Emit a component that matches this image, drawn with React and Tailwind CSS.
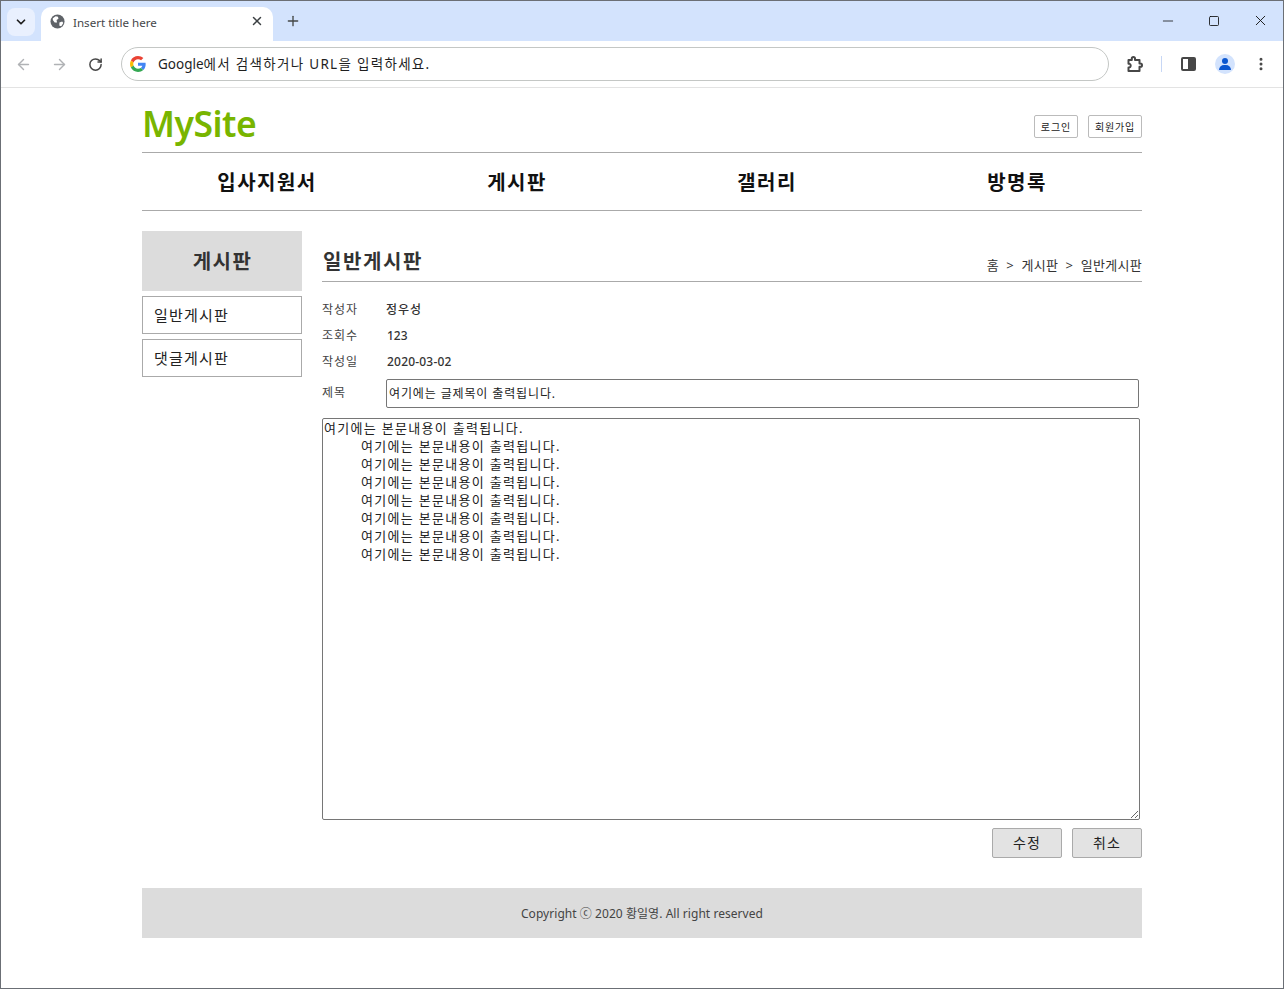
import React from 'react';
import { ArrowLeft, ArrowRight, RotateCw, X, Plus, ChevronDown, Minus, Square, EllipsisVertical } from 'lucide-react';

const FONT = '"Noto Sans", "Noto Sans CJK KR", sans-serif';
const BODY_LINE = '여기에는 본문내용이 출력됩니다.';
const BODY_TEXT = [BODY_LINE, ...Array(7).fill('\t' + BODY_LINE)].join('\n');

const GoogleLogo = () => (
  <svg width="16" height="16" viewBox="0 0 48 48">
    <path fill="#EA4335" d="M24 9.500c3.500 0 6.700 1.200 9.200 3.600l6.900-6.900C35.900 2.400 30.500 0 24 0 14.600 0 6.500 5.400 2.600 13.200l8 6.200C12.500 13.700 17.800 9.500 24 9.500z" />
    <path fill="#4285F4" d="M47 24.500c0-1.600-.1-3.100-.4-4.500H24v9h12.900c-.6 3-2.200 5.500-4.700 7.200l7.700 6C44.400 38 47 31.800 47 24.500z" />
    <path fill="#FBBC05" d="M10.600 28.600c-.5-1.400-.8-3-.8-4.600s.3-3.200.8-4.600l-8-6.200C1 16.400 0 20.100 0 24s1 7.600 2.600 10.800l8-6.200z" />
    <path fill="#34A853" d="M24 48c6.500 0 11.900-2.100 15.900-5.800l-7.700-6c-2.100 1.400-4.900 2.300-8.200 2.300-6.200 0-11.500-4.200-13.400-9.900l-8 6.200C6.500 42.600 14.600 48 24 48z" />
  </svg>
);

// chrome's extensions button, lucide's puzzle is a different shape
const ExtensionIcon = () => (
  <svg width="18" height="18" viewBox="0 0 18 18" fill="none" stroke="#474747" strokeWidth="2" strokeLinejoin="round" className="ml-[17px]">
    <path d="M2.500 5h3.300V3.600a1.600 1.600 0 0 1 3.200 0V5h4.500v3.600h.9a1.600 1.600 0 0 1 0 3.200h-.9V16H2.500v-3.500c1.500.2 2.200-.7 2.200-1.900S3.900 8.500 2.500 8.700z" />
  </svg>
);

const BrowserChrome = () => (
  <div className="shrink-0">
    <div className="h-10 bg-[#d3e3fd] flex items-end pl-[6px] relative">
      <div className="w-[28px] h-[28px] mb-[5px] rounded-lg bg-[#e9f0fe] flex items-center justify-center">
        <ChevronDown size={14} strokeWidth={3} className="text-[#1f1f1f]" />
      </div>
      <div className="ml-[6px] w-[232px] h-[34px] bg-white rounded-t-[10px] flex items-center pl-[9px] pr-[9px]">
        <svg width="15" height="15" viewBox="0 0 16 16" className="shrink-0 mb-[5px]">
          <circle cx="8" cy="8" r="7.500" fill="#5f6368" />
          <path fill="#fff" d="M3 4.500l3-2 2.500.5L9 5 7 6.500 7.500 9 5 9 3 6.500zM10 9l3-1 1.200 1.500L12 13l-2-.5z" />
        </svg>
        <span className="ml-[8px] flex-1 text-[11.600px] text-[#45474a] mb-[3px]" style={{ fontFamily: FONT }}>Insert title here</span>
        <X size={14} strokeWidth={2.500} className="text-[#3c4043] mb-[6px]" />
      </div>
      <Plus size={16} strokeWidth={2} className="ml-[12px] mb-[12px] text-[#444746]" />
      <div className="ml-auto flex items-center mb-[12px] pr-[14px] text-[#111]">
        <Minus size={16} strokeWidth={1.200} />
        <Square size={12} strokeWidth={1.700} className="ml-[32px]" />
        <X size={17} strokeWidth={1.300} className="ml-[32px]" />
      </div>
    </div>
    <div className="h-[47px] bg-white rounded-t-lg border-b border-[#e3e3e3] flex items-center pl-[14px] pr-[14px]">
      <ArrowLeft size={17} className="text-[#b0b2b5]" />
      <ArrowRight size={17} className="ml-[19px] text-[#b0b2b5]" />
      <RotateCw size={15} strokeWidth={2.400} className="ml-[20px] text-[#474747]" />
      <div className="ml-[18px] w-[988px] h-[34px] rounded-full border border-[#c4c7c5] flex items-center pl-[8px]">
        <GoogleLogo />
        <span className="ml-[12px] text-[13.500px] text-[#1f1f1f]" style={{ fontFamily: FONT }}>
          Google<span className="tracking-[1.300px]">에서 검색하거나 URL을 입력하세요.</span>
        </span>
      </div>
      <ExtensionIcon />
      <div className="ml-[17px] w-px h-[16px] bg-[#c7d7f5]" />
      <div className="ml-[19px] w-[15px] h-[14px] rounded-[2px] border-2 border-[#474747] flex justify-end">
        <div className="w-[6px] bg-[#474747]" />
      </div>
      <div className="ml-[19px] w-5 h-5 rounded-full bg-[#d3e3fd] flex flex-col items-center justify-center">
        <div className="w-[6px] h-[6px] rounded-full bg-[#0b57d0]" />
        <div className="w-[12px] h-[5px] mt-[1px] rounded-t-[5px] bg-[#0b57d0]" />
      </div>
      <EllipsisVertical size={16} strokeWidth={2.500} className="ml-[18px] text-[#474747]" />
    </div>
  </div>
);

const navItems = ['입사지원서', '게시판', '갤러리', '방명록'];

const InfoRow = ({ label, value, valueClass }) => (
  <div className="h-[26px] flex items-center text-[12px]">
    <span className="w-[64px] text-[#444] tracking-[1px]">{label}</span>
    <span className={`text-[#333] font-medium ${valueClass}`}>{value}</span>
  </div>
);

const Page = () => (
  <div className="w-[1000px] mx-auto" style={{ fontFamily: FONT }}>
    <header className="h-[65px] border-b border-[#aaa] flex items-end justify-between pb-[14px]">
      <h1 className="text-[35.500px] leading-none font-semibold text-[#78b500] -mb-[3px] tracking-[-0.5px]">MySite</h1>
      <div className="flex gap-[10px]">
        <button className="h-[23px] w-[44px] pt-[1px] border border-[#bbb] rounded-[2px] text-[10px] tracking-[1px] text-[#222]">로그인</button>
        <button className="h-[23px] w-[54px] pt-[1px] border border-[#bbb] rounded-[2px] text-[10px] tracking-[.8px] text-[#222]">회원가입</button>
      </div>
    </header>
    <nav className="h-[57px] border-b border-[#aaa] grid grid-cols-4 items-center box-content">
      {navItems.map((item) => (
        <a key={item} className="text-center text-[20px] leading-[30px] mt-[3px] font-bold tracking-[1.500px] text-[#111]">{item}</a>
      ))}
    </nav>
    <div className="flex gap-[20px] mt-[20px]">
      <aside className="w-[160px] shrink-0">
        <div className="h-[60px] bg-[#dcdcdc] flex items-center justify-center pt-[1px] pl-[1px] text-[20px] font-bold tracking-[1.500px] text-[#333]">게시판</div>
        <div className="mt-[5px] h-[38px] border border-[#aaa] flex items-center pl-[11px] text-[15px] tracking-[1.200px] text-[#222]">일반게시판</div>
        <div className="mt-[5px] h-[38px] border border-[#aaa] flex items-center pl-[11px] text-[15px] tracking-[1.200px] text-[#222]">댓글게시판</div>
      </aside>
      <main className="flex-1 min-w-0">
        <div className="h-[51px] border-b border-[#aaa] flex items-end justify-between pb-[4px]">
          <h2 className="text-[20px] leading-[30px] font-semibold tracking-[1.600px] text-[#333] ml-[1px]">일반게시판</h2>
          <p className="text-[13px] text-[#333] leading-[18px] tracking-[.3px] mb-[3px] whitespace-pre">{'홈  >  게시판  >  일반게시판'}</p>
        </div>
        <div className="mt-[15px]">
          <InfoRow label="작성자" value="정우성" valueClass="tracking-[1px]" />
          <InfoRow label="조회수" value="123" valueClass="ml-[1px]" />
          <InfoRow label="작성일" value="2020-03-02" valueClass="ml-[1px] tracking-[.2px]" />
        </div>
        <div className="flex items-center h-[30px] mt-[3px] text-[12px]">
          <span className="w-[64px] text-[#444] tracking-[1px]">제목</span>
          <input
            readOnly
            value="여기에는 글제목이 출력됩니다."
            className="w-[753px] h-[29px] border border-[#767676] rounded-[2px] px-[2px] text-[12px] tracking-[.87px] text-[#222] outline-none"
          />
        </div>
        <textarea
          readOnly
          value={BODY_TEXT}
          className="block mt-[10px] w-[818px] h-[402px] border border-[#767676] rounded-[2px] px-px pt-0 text-[13px] leading-[18px] tracking-[1.300px] text-[#222] outline-none whitespace-pre [tab-size:37px]"
        />
        <div className="flex justify-end gap-[10px] mt-[8px]">
          <button className="w-[70px] h-[30px] pb-[1px] bg-[#e3e3e3] border border-[#aaa] rounded-[2px] text-[14px] tracking-[1px] text-[#222]">수정</button>
          <button className="w-[70px] h-[30px] pb-[1px] bg-[#e3e3e3] border border-[#aaa] rounded-[2px] text-[14px] tracking-[1px] text-[#222]">취소</button>
        </div>
      </main>
    </div>
    <footer className="mt-[30px] h-[50px] pt-[1px] bg-[#dcdcdc] flex items-center justify-center text-[12px] tracking-[.05px] text-[#444]">
      Copyright ⓒ 2020 황일영. All right reserved
    </footer>
  </div>
);

export default function App() {
  return (
    <div className="w-[1284px] h-[989px] border border-[#6b6f75] bg-white flex flex-col overflow-hidden">
      <BrowserChrome />
      <Page />
    </div>
  );
}
